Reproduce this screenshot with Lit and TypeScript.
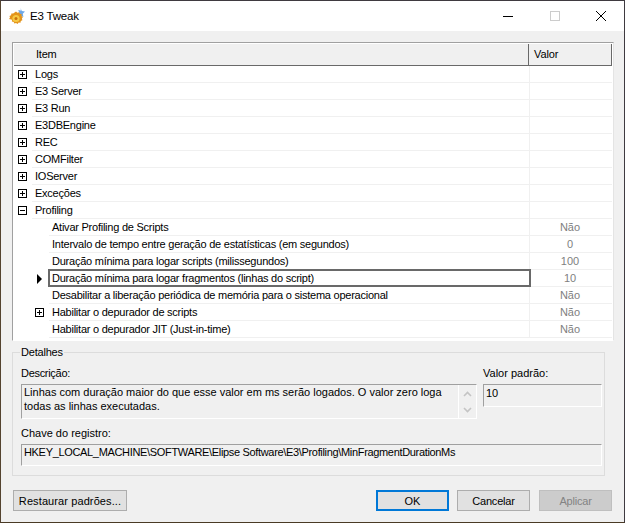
import { LitElement, html, css, svg } from "lit";
import { customElement } from "lit/decorators.js";

type Row = { t: string; v?: string; box?: "+" | "-"; level: number; sel?: boolean };
const rows: Row[] = [
  { t: "Logs", box: "+", level: 0 },
  { t: "E3 Server", box: "+", level: 0 },
  { t: "E3 Run", box: "+", level: 0 },
  { t: "E3DBEngine", box: "+", level: 0 },
  { t: "REC", box: "+", level: 0 },
  { t: "COMFilter", box: "+", level: 0 },
  { t: "IOServer", box: "+", level: 0 },
  { t: "Exceções", box: "+", level: 0 },
  { t: "Profiling", box: "-", level: 0 },
  { t: "Ativar Profiling de Scripts", v: "Não", level: 1 },
  { t: "Intervalo de tempo entre geração de estatísticas (em segundos)", v: "0", level: 1 },
  { t: "Duração mínima para logar scripts (milissegundos)", v: "100", level: 1 },
  { t: "Duração mínima para logar fragmentos (linhas do script)", v: "10", level: 1, sel: true },
  { t: "Desabilitar a liberação periódica de memória para o sistema operacional", v: "Não", level: 1 },
  { t: "Habilitar o depurador de scripts", v: "Não", box: "+", level: 1 },
  { t: "Habilitar o depurador JIT (Just-in-time)", v: "Não", level: 1 },
];

const gear = svg`<svg class="appicon" width="17" height="18" viewBox="0 0 17 18">
  <path d="M11.500 0l1.300 3 3.200.400-2.200 2.300.600 3.300-3-1.500-3 .500 1.800-3.200-.900-2.800 2.700.500z" fill="#6fa8e8"/>
  <path d="M7 3.500l1.400 1.200 1.700-.500.700 1.600 1.800.300-.100 1.800 1.400 1.200-1 1.400.500 1.700-1.600.700-.300 1.800-1.800-.100-1.200 1.400-1.400-1-1.700.500-.700-1.600-1.800-.300.100-1.800L0 11.100l1-1.400-.500-1.700 1.600-.700.300-1.800 1.800.100z" fill="#e3941c"/>
  <circle cx="7" cy="10.500" r="3.600" fill="#f6c945"/>
  <circle cx="7" cy="10.500" r="1.500" fill="#c9730f"/>
</svg>`;

function expander(sign: "+" | "-") {
  return svg`<svg class="exp" width="9" height="9" viewBox="0 0 9 9" shape-rendering="crispEdges">
    <rect x="0.500" y="0.500" width="8" height="8" fill="#fff" stroke="#000"/>
    <rect x="2" y="4" width="5" height="1" fill="#000"/>
    ${sign === "+" ? svg`<rect x="4" y="2" width="1" height="5" fill="#000"/>` : ""}
  </svg>`;
}

@customElement("app-root")
export class AppRoot extends LitElement {
  static styles = css`
    :host {
      display: block;
      width: 625px;
      height: 523px;
      font: 11px "Liberation Sans", Arial, sans-serif;
      color: #000;
    }
    .win {
      box-sizing: border-box;
      width: 625px;
      height: 523px;
      background: #f0f0f0;
      border: 1px solid #3f3a40;
      border-left-color: #54432f;
      border-right-color: #3f3a40;
      border-bottom-color: #4a3a25;
      display: flex;
      flex-direction: column;
    }
    .title {
      height: 30px;
      background: #fff;
      display: flex;
      align-items: center;
      flex: none;
    }
    .appicon { margin-left: 8px; margin-right: 4px; margin-top: 1px; }
    .title span { font-size: 11.500px; letter-spacing: -0.2px; color: #000; flex: 1; }
    .wb { width: 46px; height: 30px; display: flex; align-items: center; justify-content: center; }
    .wb-min { margin-right: 1px; }
    .body { flex: 1; display: flex; flex-direction: column; padding: 11px 11px 0 11px; }
    .tree {
      box-sizing: border-box;
      width: 602px;
      height: 299px;
      background: #fff;
      border: 1px solid #fff;
      border-top-color: #a0a0a0;
      border-left-color: #a0a0a0;
      border-right-color: #e4e4e4;
      padding: 1px;
      flex: none;
      letter-spacing: -0.24px;
    }
    .hdr {
      height: 22px;
      display: grid;
      grid-template-columns: 514px 84px;
      background: #f0f0f0;
      border-bottom: 1px solid #696969;
      box-sizing: border-box;
    }
    .hdr div { padding-left: 22px; line-height: 21px; white-space: nowrap; }
    .hdr div + div { border-left: 1px solid #696969; border-right: 1px solid #696969; padding-left: 5px; letter-spacing: -0.1px; }
    .row {
      height: 17px;
      display: grid;
      grid-template-columns: 515px 83px;
      position: relative;
    }
    .cell { display: flex; align-items: flex-start; height: 17px; box-sizing: border-box; white-space: nowrap; }
    .gut { width: 18px; flex: none; display: flex; align-items: center; padding-left: 4px; box-sizing: border-box; height: 17px; }
    .gut2 { width: 17px; flex: none; display: flex; align-items: center; padding-left: 3px; box-sizing: border-box; height: 17px; }
    .exp { display: block; }
    .txt { flex: 1; height: 17px; line-height: 16px; border-bottom: 1px solid #f0f0f0; padding-left: 3px; box-sizing: border-box; overflow: hidden; }
    .val {
      border-left: 1px solid #f0f0f0;
      border-bottom: 1px solid #f0f0f0;
      color: #808080;
      justify-content: center;
      line-height: 16px;
      letter-spacing: 0;
      padding-right: 2px;
    }
    .sel-box {
      position: absolute;
      left: 34px;
      top: -1px;
      width: 483px;
      height: 18px;
      box-sizing: border-box;
      border: 2px solid #696969;
      pointer-events: none;
    }
    .arrow {
      width: 0; height: 0;
      border-left: 5px solid #000;
      border-top: 5px solid transparent;
      border-bottom: 5px solid transparent;
      margin-left: 2px;
    }
    fieldset {
      box-sizing: border-box;
      width: 593px;
      height: 131px;
      margin: 4px 0 0 0;
      padding: 0 1px 0 8px;
      border: 1px solid #dcdcdc;
      min-width: 0;
      flex: none;
      display: block;
    }
    legend { padding: 0 1px; margin-left: -1px; line-height: 14px; height: 14px; letter-spacing: -0.2px; }
    .grid {
      display: grid;
      grid-template-columns: 456px 119px;
      column-gap: 6px;
      padding-top: 6px;
    }
    .lab { line-height: 16px; height: 19px; white-space: nowrap; }
    .lab-desc { letter-spacing: -0.3px; }
    .tb {
      box-sizing: border-box;
      border: 1px solid #fff;
      border-top-color: #a0a0a0;
      border-left-color: #a0a0a0;
      padding: 0 2px;
      line-height: 14px;
      white-space: nowrap;
    }
    .desc { height: 35px; display: flex; padding: 0 0 0 2px; }
    .desc .t { flex: 1; white-space: normal; line-height: 14px; }
    .sb { width: 18px; flex: none; display: flex; flex-direction: column; align-items: center; border-left: 1px solid #fff; padding-top: 6px; gap: 10px; box-sizing: border-box; }
    .pad { height: 23px; padding-top: 1px; }
    .reg { height: 22px; padding-top: 0; line-height: 14px; letter-spacing: -0.33px; }
    .reglab { grid-column: 1 / 3; margin-top: 6px; }
    .regbox { grid-column: 1 / 3; }
    .btns { display: flex; margin-top: 14px; margin-left: 1px; }
    button {
      box-sizing: border-box;
      height: 21px;
      width: 73px;
      font: inherit;
      color: #000;
      background: #e1e1e1;
      border: 1px solid #adadad;
      padding: 0;
      margin: 0;
      line-height: 18px;
      white-space: nowrap;
    }
    .restore { width: 114px; margin-right: auto; letter-spacing: 0.1px; }
    .ok { border: 2px solid #0078d7; margin-right: 8px; }
    .cancel { margin-right: 9px; letter-spacing: -0.2px; }
    .apply { background: #ccc; border-color: #bfbfbf; color: #838383; margin-right: 1px; letter-spacing: -0.2px; }
  `;

  private renderRow(r: Row) {
    return html`<div class="row">
      <div class="cell">
        ${r.level === 0
          ? html`<div class="gut">${r.box ? expander(r.box) : ""}</div>`
          : html`<div class="gut"></div>
              <div class="gut2">${r.sel ? html`<div class="arrow"></div>` : r.box ? expander(r.box) : ""}</div>`}
        <div class="txt">${r.t}</div>
      </div>
      <div class="cell val">${r.v ?? ""}</div>
      ${r.sel ? html`<div class="sel-box"></div>` : ""}
    </div>`;
  }

  render() {
    return html`<div class="win">
      <div class="title">
        ${gear}<span>E3 Tweak</span>
        <div class="wb wb-min">
          <svg width="10" height="10" viewBox="0 0 10 10" shape-rendering="crispEdges"><rect x="0" y="5" width="10" height="1" fill="#000"/></svg>
        </div>
        <div class="wb">
          <svg width="10" height="10" viewBox="0 0 10 10" shape-rendering="crispEdges"><rect x="0.500" y="0.500" width="9" height="9" fill="none" stroke="#ccc"/></svg>
        </div>
        <div class="wb">
          <svg width="10" height="10" viewBox="0 0 10 10"><path d="M0 0L10 10M10 0L0 10" stroke="#000" stroke-width="1" fill="none"/></svg>
        </div>
      </div>
      <div class="body">
        <div class="tree">
          <div class="hdr"><div>Item</div><div>Valor</div></div>
          ${rows.map((r) => this.renderRow(r))}
        </div>
        <fieldset>
          <legend>Detalhes</legend>
          <div class="grid">
            <div class="lab lab-desc">Descrição:</div>
            <div class="lab">Valor padrão:</div>
            <div class="tb desc">
              <div class="t">Linhas com duração maior do que esse valor em ms serão logados. O valor zero loga todas as linhas executadas.</div>
              <div class="sb">
                <svg width="9" height="6" viewBox="0 0 9 6"><path d="M1 5L4.500 1.500L8 5" fill="none" stroke="#c4c4c4" stroke-width="1.600"/></svg>
                <svg width="9" height="6" viewBox="0 0 9 6"><path d="M1 1L4.500 4.500L8 1" fill="none" stroke="#c4c4c4" stroke-width="1.600"/></svg>
              </div>
            </div>
            <div class="tb pad">10</div>
            <div class="lab reglab">Chave do registro:</div>
            <div class="tb reg regbox">HKEY_LOCAL_MACHINE\\SOFTWARE\\Elipse Software\\E3\\Profiling\\MinFragmentDurationMs</div>
          </div>
        </fieldset>
        <div class="btns">
          <button class="restore">Restaurar padrões...</button>
          <button class="ok">OK</button>
          <button class="cancel">Cancelar</button>
          <button class="apply" disabled>Aplicar</button>
        </div>
      </div>
    </div>`;
  }
}
